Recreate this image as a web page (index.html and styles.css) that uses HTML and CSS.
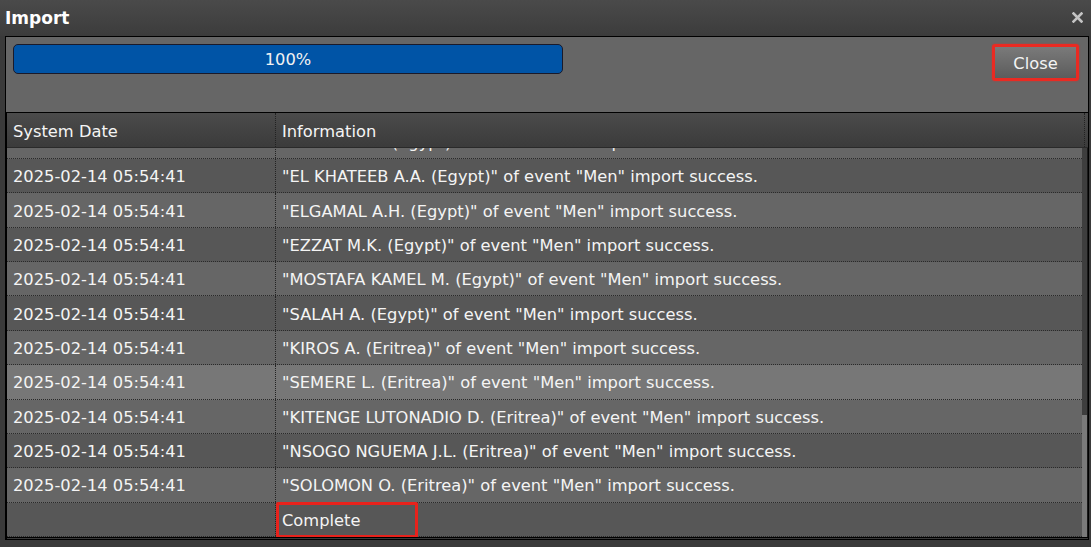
FILE: index.html
```html
<!DOCTYPE html>
<html lang="en">
<head>
  <meta charset="UTF-8" />
  <title>Import</title>
  <link rel="stylesheet" href="styles.css">
</head>
<body>

  <div class="dialog">
    <div class="titlebar">
      <span class="title">Import</span>
      <span class="x-btn">
        <svg width="11" height="11" viewBox="0 0 11 11">
          <path d="M1.5 1.5 L9.5 9.5 M9.5 1.5 L1.5 9.5" stroke="#c4c4c4" stroke-width="2.6" stroke-linecap="square"/>
        </svg>
      </span>
    </div>

    <div class="panel">
      <div class="toolbar">
        <div class="progress">100%</div>
        <button class="close">Close</button>
      </div>

      <div class="grid">
        <div class="grid-head">
          <div class="col-date">System Date</div>
          <div class="col-info">Information</div>
        </div>
        <div class="grid-body">
          <div class="rows" id="rows"></div>
          <div class="scrollbar"><div class="thumb"></div></div>
        </div>
      </div>
    </div>
  </div>

  <script>
    const names = [
      'ELSAYED M. (Egypt)',
      'EL KHATEEB A.A. (Egypt)',
      'ELGAMAL A.H. (Egypt)',
      'EZZAT M.K. (Egypt)',
      'MOSTAFA KAMEL M. (Egypt)',
      'SALAH A. (Egypt)',
      'KIROS A. (Eritrea)',
      'SEMERE L. (Eritrea)',
      'KITENGE LUTONADIO D. (Eritrea)',
      'NSOGO NGUEMA J.L. (Eritrea)',
      'SOLOMON O. (Eritrea)'
    ];
    const rows = document.getElementById('rows');

    names.forEach((name, i) => {
      let cls = i % 2 === 0 ? 'row light' : 'row dark';
      if (i === 7) cls = 'row hover';
      rows.innerHTML += `<div class="${cls}">
        <div class="col-date">2025-02-14 05:54:41</div>
        <div class="col-info">"${name}" of event "Men" import success.</div>
      </div>`;
    });

    // last line of the log
    rows.innerHTML += `<div class="row dark">
      <div class="col-date"></div>
      <div class="col-info"><span class="mark">Complete</span></div>
    </div>`;
  </script>

</body>
</html>
```

FILE: styles.css
```css
* {
  box-sizing: border-box;
}

html, body {
  margin: 0;
  padding: 0;
  background: #3a3a3a;
  font-family: 'DejaVu Sans', Verdana, sans-serif;
  color: #f4f4f4;
}

.dialog {
  width: 1091px;
  height: 547px;
  background: #3a3a3a;
  overflow: hidden;
}

.titlebar {
  height: 36px;
  display: flex;
  justify-content: space-between;
  align-items: center;
  padding: 0 8px 0 5px;
  background: linear-gradient(#4a4a4a, #3c3c3c);
}

.title {
  font-weight: bold;
  font-size: 17px;
  color: #fff;
}

.x-btn {
  display: flex;
  margin-top: -2px;
}

.panel {
  margin: 0 2px 0 5px;
  border: 1px solid #000;
  border-bottom: none;
  background: #666;
}

.toolbar {
  height: 75px;
  display: flex;
  justify-content: space-between;
  align-items: flex-start;
  padding: 7px 9px 0 7px;
}

.progress {
  width: 550px;
  height: 30px;
  background: #0054a6;
  border: 1px solid #1a1a2a;
  border-radius: 5px;
  display: flex;
  justify-content: center;
  align-items: center;
  padding-top: 1px;
  font-size: 16.3px;
  color: #f2f2f2;
}

.close {
  margin-top: 0;
  width: 87px;
  height: 37px;
  border: 3px solid #ea2a22;
  border-radius: 3px;
  box-shadow: 0 0 2px rgba(234, 42, 34, 0.7);
  background: linear-gradient(#7a7a7a, #5c5c5c);
  color: #f4f4f4;
  font-family: 'DejaVu Sans', Verdana, sans-serif;
  font-size: 16.3px;
  padding: 1px 0 0;
}

.grid {
  border-top: 1px solid #000;
  border-left: 1px solid #000;
  border-bottom: 3px double #000;
  background: #3a3a3a;
}

.grid-head {
  height: 35px;
  display: flex;
  align-items: stretch;
  background: linear-gradient(#4b4b4b, #3b3b3b);
  border-bottom: 1px solid #2a2a2a;
  padding-right: 3px;
}

.grid-head .col-info {
  border-right: 1px dotted #222;
}

.col-date {
  width: 269px;
  flex: none;
  border-right: 1px dotted #222;
  padding: 2px 0 0 6px;
  display: flex;
  align-items: center;
  font-size: 16.3px;
}

.col-info {
  flex: 1;
  padding: 2px 0 0 6px;
  display: flex;
  align-items: center;
  font-size: 16.3px;
  white-space: nowrap;
}

.grid-body {
  height: 389px;
  display: flex;
}

.rows {
  flex: 1;
  display: flex;
  flex-direction: column;
  justify-content: flex-end;
  overflow: hidden;
}

.row {
  flex: none;
  height: 34.36px;
  display: flex;
  border-bottom: 1px dotted #2a2a2a;
}

.row.light {
  background: #666;
}

.row.dark {
  background: #575757;
}

.row.hover {
  background: #777;
}

.mark {
  margin-left: -6px;
  padding: 1px 0 0 3px;
  width: 142px;
  height: 36px;
  margin-top: 0;
  border: 3px solid #e8221c;
  border-radius: 2px;
  display: flex;
  align-items: center;
}

.scrollbar {
  width: 6px;
  flex: none;
  background: #3e3e3e;
  display: flex;
  flex-direction: column;
  justify-content: flex-end;
  border-right: 1px solid #1a1a1a;
}

.thumb {
  height: 122px;
  background: #7a7a7a;
}
```
